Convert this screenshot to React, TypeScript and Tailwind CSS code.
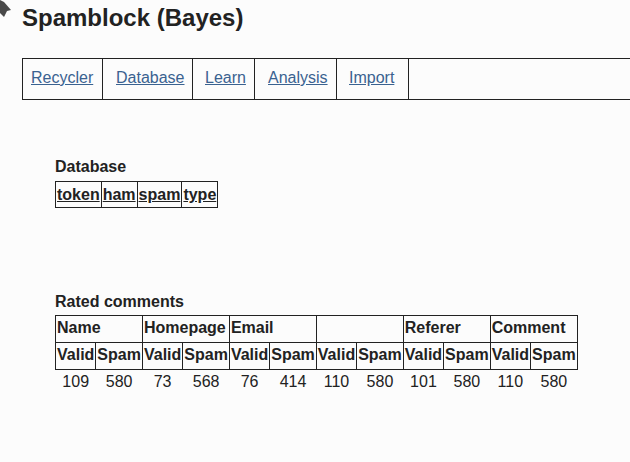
import React from 'react';

const tabs = [
  { label: 'Recycler', cls: 'w-[80px] pl-[8px]' },
  { label: 'Database', cls: 'w-[90px] pl-[13px]' },
  { label: 'Learn', cls: 'w-[62px] pl-[12px]' },
  { label: 'Analysis', cls: 'w-[82px] pl-[13px]' },
  { label: 'Import', cls: 'w-[72px] pl-[12px]' },
];

const groups = ['Name', 'Homepage', 'Email', '', 'Referer', 'Comment'];
const counts = [
  [109, 580],
  [73, 568],
  [76, 414],
  [110, 580],
  [101, 580],
  [110, 580],
];

const cell = 'border border-[#222] px-px pt-0 pb-[2px] leading-[24px] font-bold';

export default function App() {
  return (
    <div className="relative min-h-[462px] w-[630px] overflow-hidden bg-[#fcfcfc] pl-[22px] pt-[4px] font-['Liberation_Sans',Arial,sans-serif] text-[16px] text-[#222]">
      {/* cursor remnant */}
      <svg className="absolute left-0 top-0" width="12" height="18" viewBox="0 0 12 18">
        <polygon points="0,0 4,2 11,10 7,11 4,17 0,13" fill="#4a4a4a" />
      </svg>

      <h1 className="text-[24px] font-bold leading-[28px]">Spamblock (Bayes)</h1>

      <nav className="mt-[26px] flex h-[42px] w-[640px] border border-[#222]">
        {tabs.map((t) => (
          <div key={t.label} className={`flex items-center border-r border-[#222] pb-[2px] ${t.cls}`}>
            <a href="#" className="text-[#3a6290] underline">
              {t.label}
            </a>
          </div>
        ))}
        <div className="flex-1" />
      </nav>

      <div className="ml-[33px]">
        <h3 className="mt-[58px] font-bold leading-[18px]">Database</h3>
        <table className="mt-[5px] border-collapse">
          <thead>
            <tr>
              {['token', 'ham', 'spam', 'type'].map((h) => (
                <th key={h} className="border border-[#222] px-px py-px text-left font-bold leading-[23px]">
                  <a href="#" className="underline">
                    {h}
                  </a>
                </th>
              ))}
            </tr>
          </thead>
        </table>

        <h3 className="mt-[85px] font-bold leading-[18px]">Rated comments</h3>
        <table className="mt-[4px] border-collapse">
          <thead>
            <tr>
              {groups.map((g, i) => (
                <th key={i} colSpan={2} className={`${cell} text-left`}>
                  {g}
                </th>
              ))}
            </tr>
            <tr>
              {groups.map((_, i) => (
                <React.Fragment key={i}>
                  <th className={`${cell} text-left`}>Valid</th>
                  <th className={`${cell} text-left`}>Spam</th>
                </React.Fragment>
              ))}
            </tr>
          </thead>
          <tbody>
            <tr>
              {counts.map(([v, s], i) => (
                <React.Fragment key={i}>
                  <td className="px-px pt-0 pb-[2px] text-center leading-[24px]">{v}</td>
                  <td className="px-px pt-0 pb-[2px] text-center leading-[24px]">{s}</td>
                </React.Fragment>
              ))}
            </tr>
          </tbody>
        </table>
      </div>
    </div>
  );
}
